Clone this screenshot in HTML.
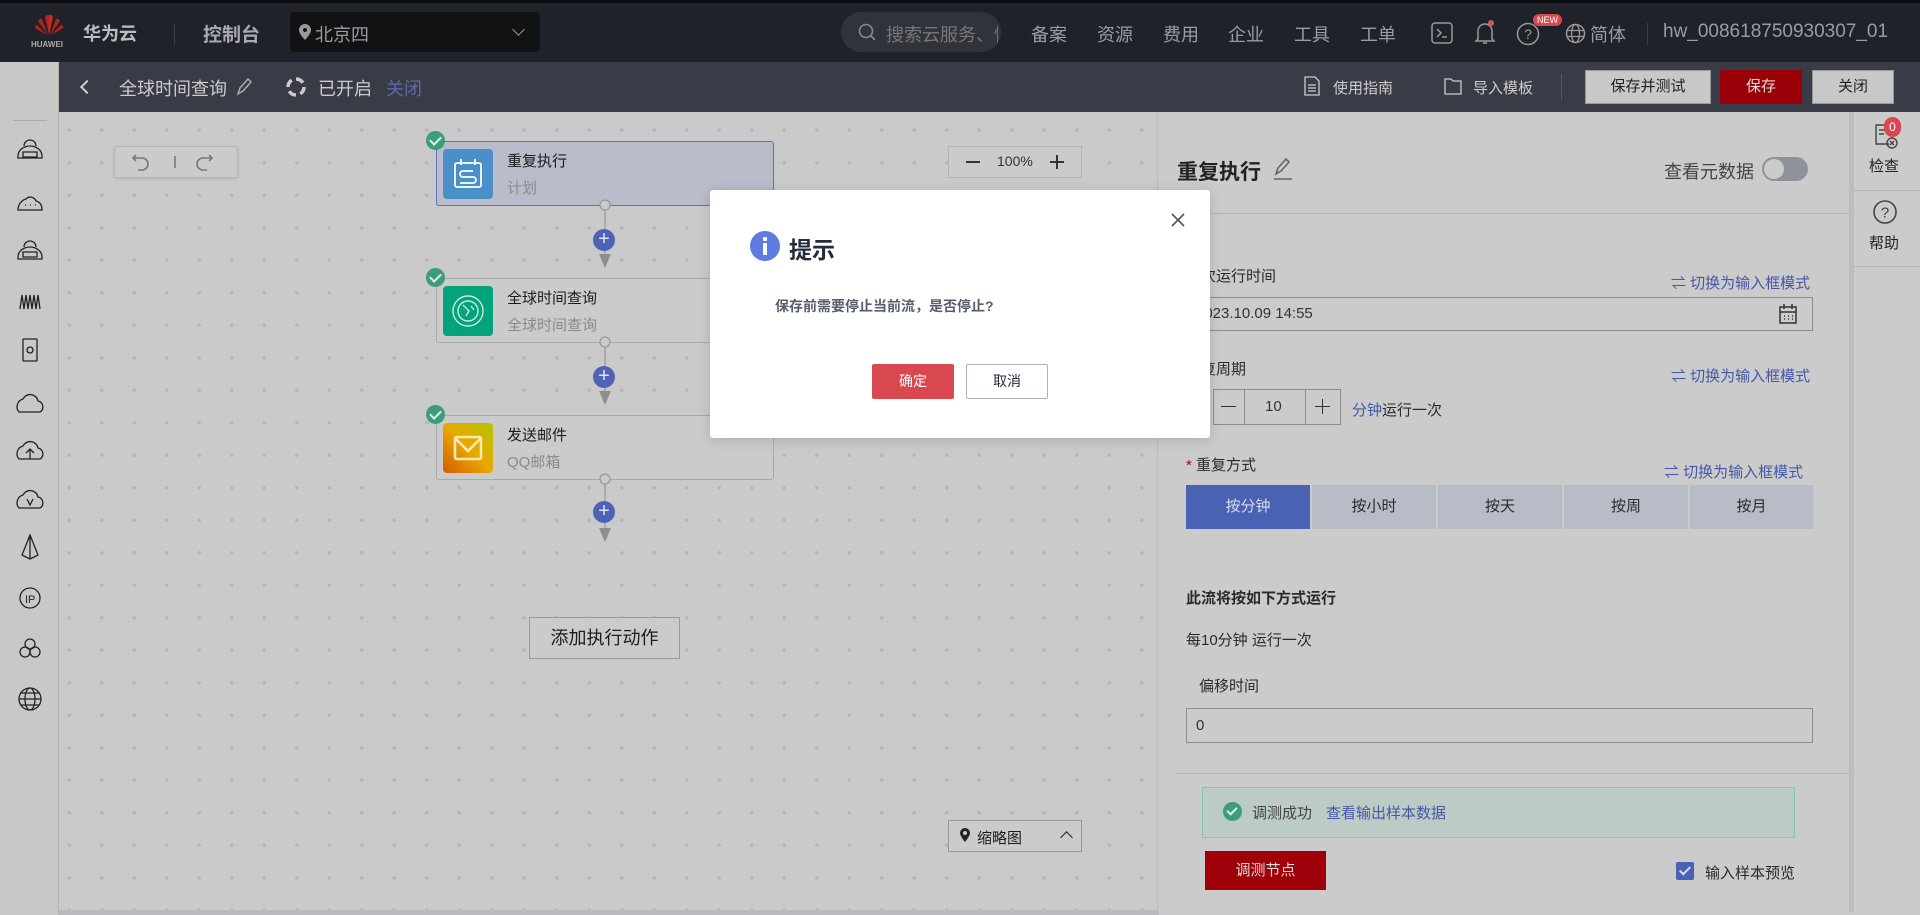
<!DOCTYPE html>
<html><head><meta charset="utf-8">
<style>
*{box-sizing:border-box;margin:0;padding:0}
body{width:1920px;height:915px;overflow:hidden;position:relative;font-family:"Liberation Sans","Noto Sans CJK SC",sans-serif;background:#cacaca;color:#1c1c1c}
.a{position:absolute}
.top{left:0;top:0;width:1920px;height:62px;background:#1f2229;border-top:3px solid #0c0d10}
.tw{color:#9a9ca3;font-size:18px;white-space:nowrap}
.sub{left:0;top:62px;width:1920px;height:50px;background:#393c47}
.side{left:0;top:62px;width:59px;height:853px;background:#c8c8c8;border-right:1px solid #b4b4b4}
.canvas{left:59px;top:112px;width:1098px;height:800px;background-color:#cacaca;background-image:radial-gradient(circle,#b6b6b6 1.6px,transparent 2px);background-size:32.5px 32.5px;background-position:-6px 2px}
.node{width:338px;height:65px;border:1px solid #a9a9a9;border-radius:3px;background:#cbcbcb}
.chk{width:19px;height:19px;border-radius:50%;background:#3d9c7c}
.chk::after{content:"";position:absolute;left:6px;top:3px;width:5px;height:9px;border-right:2px solid #dcefe8;border-bottom:2px solid #dcefe8;transform:rotate(45deg)}
.ic{width:50px;height:50px;border-radius:4px}
.nt{font-size:15px;color:#1c1c1c}
.ns{font-size:15px;color:#8a8a8a}
.plus{width:22px;height:22px;border-radius:50%;background:#4f62b5;color:#dfe3f3;font-size:20px;line-height:21px;text-align:center}
.btnb{border:1px solid #999;background:#cbcbcb}
.panel{left:1157px;top:112px;width:692px;height:800px;background:#cbcbcb;border-left:1px solid #bbb}
.link{color:#4558a8;font-size:15px;white-space:nowrap}
.lbl{font-size:15px;color:#2a2a2a;white-space:nowrap}
.tab{height:44px;background:#b8bcc7;color:#2a2a2a;font-size:15px;text-align:center;line-height:44px}
.ipt{border:1px solid #8a8d94;background:#cbcbcb}
</style></head><body>
<div class="a top">
 <svg class="a" style="left:34px;top:10px" width="30" height="26" viewBox="0 0 30 26"><g fill="#b8221b"><path d="M15 22 L11 4 Q13 1 15 2Z"/><path d="M15 22 L19 4 Q17 1 15 2Z" fill="#c92a22"/><path d="M14 22 L4 8 Q6 5 8 6Z"/><path d="M16 22 L26 8 Q24 5 22 6Z"/><path d="M13 22 L1 15 Q1 12 3 12Z"/><path d="M17 22 L29 15 Q29 12 27 12Z"/></g></svg>
 <div class="a" style="left:31px;top:37px;font-size:8px;color:#aaa;font-weight:bold">HUAWEI</div>
 <div class="a tw" style="left:83px;top:17px;font-weight:bold;color:#bdbec2">华为云</div>
 <div class="a" style="left:174px;top:20px;width:1px;height:22px;background:#3a3d44"></div>
 <div class="a tw" style="left:203px;top:17px;font-weight:bold;color:#a9abb0;font-size:19px">控制台</div>
 <div class="a" style="left:290px;top:9px;width:250px;height:40px;background:#111214;border-radius:4px"></div>
 <svg class="a" style="left:299px;top:21px" width="12" height="16" viewBox="0 0 12 16"><path d="M6 0a6 6 0 0 0-6 6c0 4 6 10 6 10s6-6 6-10a6 6 0 0 0-6-6zm0 8a2 2 0 1 1 0-4 2 2 0 0 1 0 4z" fill="#999"/></svg>
 <div class="a tw" style="left:315px;top:18px">北京四</div>
 <div class="a" style="left:514px;top:22px;width:9px;height:9px;border-right:1.5px solid #999;border-bottom:1.5px solid #999;transform:rotate(45deg)"></div>
 <div class="a" style="left:841px;top:9px;width:160px;height:40px;background:#30333a;border-radius:20px"></div>
 <svg class="a" style="left:858px;top:20px" width="18" height="18"><circle cx="8" cy="8" r="6.5" stroke="#888" stroke-width="1.6" fill="none"/><path d="M13 13l4 4" stroke="#888" stroke-width="1.6"/></svg>
 <div class="a tw" style="left:886px;top:18px;color:#777;width:112px;overflow:hidden">搜索云服务、快</div>
 <div class="a tw" style="left:1031px;top:18px">备案</div>
 <div class="a tw" style="left:1097px;top:18px">资源</div>
 <div class="a tw" style="left:1163px;top:18px">费用</div>
 <div class="a tw" style="left:1228px;top:18px">企业</div>
 <div class="a tw" style="left:1294px;top:18px">工具</div>
 <div class="a tw" style="left:1360px;top:18px">工单</div>
 <svg class="a" style="left:1431px;top:19px" width="22" height="22"><rect x="1" y="1" width="20" height="20" rx="3" stroke="#999" stroke-width="1.5" fill="none"/><path d="M6 7l4 4-4 4M11 15h5" stroke="#999" stroke-width="1.5" fill="none"/></svg>
 <svg class="a" style="left:1474px;top:17px" width="22" height="26"><path d="M4 19V11a7 7 0 0 1 14 0v8l2 2H2z M9 23h4" stroke="#999" stroke-width="1.5" fill="none"/><circle cx="17" cy="3" r="3" fill="#e0525a"/></svg>
 <svg class="a" style="left:1516px;top:19px" width="24" height="24"><circle cx="12" cy="12" r="10.5" stroke="#999" stroke-width="1.5" fill="none"/><text x="12" y="17" font-size="14" fill="#999" text-anchor="middle" font-family="Liberation Sans">?</text></svg>
 <div class="a" style="left:1533px;top:11px;background:#d9474f;color:#fff;font-size:9px;border-radius:7px;padding:1px 4px">NEW</div>
 <svg class="a" style="left:1565px;top:20px" width="21" height="21"><circle cx="10.5" cy="10.5" r="9" stroke="#999" stroke-width="1.5" fill="none"/><ellipse cx="10.5" cy="10.5" rx="4" ry="9" stroke="#999" stroke-width="1.3" fill="none"/><path d="M2 7.5h17M2 13.5h17" stroke="#999" stroke-width="1.3"/></svg>
 <div class="a tw" style="left:1590px;top:18px">简体</div>
 <div class="a" style="left:1647px;top:20px;width:1px;height:22px;background:#3a3d44"></div>
 <div class="a tw" style="left:1663px;top:18px;font-size:19px">hw_008618750930307_01</div>
</div>
<div class="a sub">
 <div class="a" style="left:0;top:0;width:59px;height:50px;background:#c8c8c8"></div>
 <div class="a" style="left:17px;top:15px;width:24px;height:3px;background:#222733;box-shadow:0 8px 0 #222733,0 16px 0 #222733"></div>
 <div class="a" style="left:82px;top:20px;width:10px;height:10px;border-left:2px solid #ccc;border-bottom:2px solid #ccc;transform:rotate(45deg)"></div>
 <div class="a tw" style="left:119px;top:13px;color:#ccc">全球时间查询</div>
 <svg class="a" style="left:235px;top:15px" width="18" height="20"><path d="M3 17l2-6 8-9 3 3-8 9z" stroke="#aaa" stroke-width="1.5" fill="none"/></svg>
 <svg class="a" style="left:285px;top:14px" width="22" height="22"><circle cx="11" cy="11" r="8" stroke="#ccc" stroke-width="3.5" fill="none" stroke-dasharray="8 4.5"/></svg>
 <div class="a tw" style="left:318px;top:13px;color:#ccc">已开启</div>
 <div class="a tw" style="left:386px;top:13px;color:#5f6aa8">关闭</div>
 <svg class="a" style="left:1304px;top:14px" width="16" height="20"><path d="M1 1h10l4 4v14H1z M4 9h8M4 12h8M4 15h8" stroke="#ccc" stroke-width="1.3" fill="none"/></svg>
 <div class="a tw" style="left:1333px;top:15px;color:#ccc;font-size:15px">使用指南</div>
 <svg class="a" style="left:1444px;top:15px" width="18" height="18"><path d="M1 2h6l2 2h8v13H1z" stroke="#ccc" stroke-width="1.3" fill="none"/></svg>
 <div class="a tw" style="left:1473px;top:15px;color:#ccc;font-size:15px">导入模板</div>
 <div class="a" style="left:1561px;top:12px;width:1px;height:26px;background:#55585f"></div>
 <div class="a" style="left:1585px;top:8px;width:126px;height:34px;background:#c8c8c8;border:1px solid #999;color:#222;font-size:15px;text-align:center;line-height:32px">保存并测试</div>
 <div class="a" style="left:1720px;top:8px;width:82px;height:34px;background:#9a0008;color:#ddd;font-size:15px;text-align:center;line-height:34px;border-radius:2px">保存</div>
 <div class="a" style="left:1812px;top:8px;width:82px;height:34px;background:#c8c8c8;border:1px solid #999;color:#222;font-size:15px;text-align:center;line-height:32px">关闭</div>
</div>
<div class="a side">
 <div class="a" style="left:13px;top:58px;width:34px;height:1px;background:#aaa"></div>
 <svg class="a" style="left:14px;top:70px" width="32" height="640" fill="none" stroke="#222" stroke-width="1.3">
  <path d="M4 24a12 10 0 0 1 24 0v2H4z M10 14a6 6 0 0 1 12 0 M9 20h14v5H9z"/>
  <g transform="translate(0,52)"><path d="M4 26c0-6 4-10 8-11a6 6 0 0 1 10 2c4 1 6 4 6 9z M11 21h1M16 21h1M21 21h1"/></g>
  <g transform="translate(0,101)"><path d="M4 24a12 10 0 0 1 24 0v2H4z M10 14a6 6 0 0 1 12 0 M9 19h14v5H9z"/></g>
  <g transform="translate(0,151)"><path d="M6 26l2-14 2 14 2-14 2 14 2-14 2 14 2-14 2 14 2-14 2 14"/></g>
  <g transform="translate(0,201)"><rect x="9" y="6" width="14" height="22" rx="1"/><circle cx="16" cy="17" r="3"/></g>
  <g transform="translate(0,254)"><path d="M5 26a8 8 0 0 1 4-13 8 8 0 0 1 15 2 6 6 0 0 1 2 11z"/></g>
  <g transform="translate(0,301)"><path d="M5 26a8 8 0 0 1 4-13 8 8 0 0 1 15 2 6 6 0 0 1 2 11z M16 26v-9 M12 20l4-4 4 4"/></g>
  <g transform="translate(0,350)"><path d="M5 26a8 8 0 0 1 4-13 8 8 0 0 1 15 2 6 6 0 0 1 2 11z M13 17l3 6 3-6"/></g>
  <g transform="translate(0,399)"><path d="M16 4l-8 20 8 4 8-4z M16 4v24"/></g>
  <g transform="translate(0,450)"><circle cx="16" cy="16" r="10"/><text x="11" y="21" font-size="11" fill="#222" stroke="none" font-family="Liberation Sans">IP</text></g>
  <g transform="translate(0,500)"><circle cx="16" cy="12" r="5"/><circle cx="11" cy="20" r="5"/><circle cx="21" cy="20" r="5"/></g>
  <g transform="translate(0,551)"><circle cx="16" cy="16" r="11"/><ellipse cx="16" cy="16" rx="5" ry="11"/><path d="M5 16h22M7 10h18M7 22h18"/></g>
 </svg>
 <div class="a" style="left:63px;top:420px;border-left:6px solid #333;border-top:5px solid transparent;border-bottom:5px solid transparent"></div>
</div>
<div class="a canvas"></div>
<div class="a" style="left:114px;top:146px;width:124px;height:32px;background:#cbcbcb;border:1px solid #b5b5b5;box-shadow:0 1px 3px rgba(0,0,0,.1)"></div>
<svg class="a" style="left:130px;top:150px" width="100" height="24" fill="none" stroke="#777" stroke-width="1.6"><path d="M6 5l-3 3 3 3M3 8h9a6 6 0 0 1 0 12h-4"/><path d="M45 6v12"/><path d="M79 5l3 3-3 3M82 8h-9a6 6 0 0 0 0 12h4"/></svg>
<div class="a" style="left:948px;top:146px;width:134px;height:32px;background:#cbcbcb;border:1px solid #b5b5b5"></div>
<div class="a" style="left:966px;top:161px;width:14px;height:1.5px;background:#333"></div>
<div class="a" style="left:997px;top:153px;font-size:14px;color:#333">100%</div>
<div class="a" style="left:1050px;top:161px;width:14px;height:1.5px;background:#333"></div>
<div class="a" style="left:1056px;top:155px;width:1.5px;height:14px;background:#333"></div>
<div class="a node" style="left:436px;top:141px;background:#b8bccb;border-color:#5d72c0"></div>
<div class="a ic" style="left:443px;top:149px;background:#4a90c8"></div>
<svg class="a" style="left:451px;top:157px" width="34" height="34" fill="none" stroke="#e8f0f8" stroke-width="2"><rect x="4" y="6" width="26" height="24" rx="2"/><path d="M10 2v6M24 2v6M22 14h-10a3 3 0 0 0 0 6h10a3 3 0 0 1 0 6H9"/></svg>
<div class="a nt" style="left:507px;top:150px">重复执行</div>
<div class="a ns" style="left:507px;top:177px">计划</div>
<div class="a chk" style="left:426px;top:131px"></div>
<div class="a node" style="left:436px;top:278px"></div>
<div class="a ic" style="left:443px;top:286px;background:#03a37c"></div>
<svg class="a" style="left:449px;top:292px" width="38" height="38" fill="none" stroke="#c8ebe0" stroke-width="1.4"><circle cx="19" cy="19" r="15"/><circle cx="19" cy="19" r="10"/><path d="M14 13l6 6-3 5M22 14l3 4"/></svg>
<div class="a nt" style="left:507px;top:287px">全球时间查询</div>
<div class="a ns" style="left:507px;top:314px">全球时间查询</div>
<div class="a chk" style="left:426px;top:268px"></div>
<div class="a node" style="left:436px;top:415px"></div>
<div class="a ic" style="left:443px;top:423px;background:linear-gradient(225deg,#b6c400,#e8a800 50%,#d45a00)"></div>
<svg class="a" style="left:452px;top:432px" width="32" height="32" fill="none" stroke="#fbe9b0" stroke-width="2.6"><rect x="3" y="5" width="26" height="22" rx="2"/><path d="M4 7l12 12 12-12"/></svg>
<div class="a nt" style="left:507px;top:424px">发送邮件</div>
<div class="a ns" style="left:507px;top:451px">QQ邮箱</div>
<div class="a chk" style="left:426px;top:405px"></div>
<svg class="a" style="left:590px;top:198px" width="30" height="350">
 <g stroke="#9a9a9a" stroke-width="1.3" fill="#cbcbcb"><path d="M15 8v56M15 145v56M15 282v56"/><circle cx="15" cy="7" r="5"/><circle cx="15" cy="144" r="5"/><circle cx="15" cy="281" r="5"/></g>
 <g fill="#8e8e8e"><path d="M9 56l6 14 6-14zM9 193l6 14 6-14zM9 330l6 14 6-14z"/></g>
</svg>
<div class="a plus" style="left:593px;top:229px">+</div>
<div class="a plus" style="left:593px;top:366px">+</div>
<div class="a plus" style="left:593px;top:501px">+</div>
<div class="a btnb" style="left:529px;top:617px;width:151px;height:42px;font-size:18px;text-align:center;line-height:40px;color:#1c1c1c">添加执行动作</div>
<div class="a btnb" style="left:948px;top:820px;width:134px;height:32px"></div>
<svg class="a" style="left:960px;top:828px" width="10" height="14"><path d="M5 0a5 5 0 0 0-5 5c0 3 5 9 5 9s5-6 5-9a5 5 0 0 0-5-5zm0 7a2 2 0 1 1 0-4 2 2 0 0 1 0 4z" fill="#222"/></svg>
<div class="a" style="left:977px;top:827px;font-size:15px">缩略图</div>
<div class="a" style="left:1062px;top:833px;width:9px;height:9px;border-left:1.6px solid #222;border-top:1.6px solid #222;transform:rotate(45deg)"></div>
<div class="a" style="left:59px;top:910px;width:1100px;height:5px;background:#b9b9be"></div>
<div class="a panel">
 <div class="a" style="left:19px;top:44px;font-size:21px;font-weight:bold;color:#222">重复执行</div>
 <svg class="a" style="left:114px;top:44px" width="22" height="26"><path d="M4 18l2-6 8-9 3 3-8 9z" stroke="#666" stroke-width="1.6" fill="none"/><path d="M2 23h18" stroke="#666" stroke-width="1.6"/></svg>
 <div class="a" style="left:506px;top:46px;font-size:18px;color:#444">查看元数据</div>
 <div class="a" style="left:604px;top:45px;width:46px;height:24px;border-radius:12px;background:#8f9299"></div>
 <div class="a" style="left:606px;top:47px;width:20px;height:20px;border-radius:50%;background:#cbcbcb"></div>
 <div class="a" style="left:3px;top:101px;width:690px;height:1px;background:#b3b3b3"></div>
 <div class="a lbl" style="left:28px;top:153px">首次运行时间</div>
 <div class="a link" style="left:513px;top:160px">⇌ 切换为输入框模式</div>
 <div class="a ipt" style="left:28px;top:185px;width:627px;height:34px"></div>
 <div class="a" style="left:38px;top:193px;font-size:15px;color:#333">2023.10.09 14:55</div>
 <svg class="a" style="left:620px;top:191px" width="20" height="22" fill="none" stroke="#333" stroke-width="1.5"><rect x="2" y="4" width="16" height="16"/><path d="M6 1v5M14 1v5M2 9h16"/><path d="M6 13h1M10 13h1M14 13h1M6 16h1M10 16h1M14 16h1"/></svg>
 <div class="a lbl" style="left:28px;top:246px">重复周期</div>
 <div class="a link" style="left:513px;top:253px">⇌ 切换为输入框模式</div>
 <div class="a ipt" style="left:55px;top:277px;width:128px;height:36px"></div>
 <div class="a" style="left:86px;top:277px;width:1px;height:36px;background:#8a8d94"></div>
 <div class="a" style="left:147px;top:277px;width:1px;height:36px;background:#8a8d94"></div>
 <div class="a" style="left:63px;top:294px;width:15px;height:1.3px;background:#333"></div>
 <div class="a" style="left:157px;top:294px;width:15px;height:1.3px;background:#333"></div>
 <div class="a" style="left:164px;top:287px;width:1.3px;height:15px;background:#333"></div>
 <div class="a" style="left:107px;top:286px;font-size:15px;color:#333">10</div>
 <div class="a lbl" style="left:194px;top:287px"><span style="color:#4558a8">分钟</span>运行一次</div>
 <div class="a lbl" style="left:28px;top:342px"><span style="color:#a0000a">*</span> 重复方式</div>
 <div class="a link" style="left:506px;top:349px">⇌ 切换为输入框模式</div>
 <div class="a tab" style="left:28px;top:373px;width:124px;background:#4a62b3;color:#d8dcee">按分钟</div>
 <div class="a tab" style="left:154px;top:373px;width:124px">按小时</div>
 <div class="a tab" style="left:280px;top:373px;width:124px">按天</div>
 <div class="a tab" style="left:406px;top:373px;width:124px">按周</div>
 <div class="a tab" style="left:532px;top:373px;width:123px">按月</div>
 <div class="a lbl" style="left:28px;top:475px;font-weight:bold">此流将按如下方式运行</div>
 <div class="a lbl" style="left:28px;top:517px">每10分钟 运行一次</div>
 <div class="a lbl" style="left:41px;top:563px">偏移时间</div>
 <div class="a ipt" style="left:28px;top:596px;width:627px;height:35px"></div>
 <div class="a" style="left:38px;top:605px;font-size:15px;color:#333">0</div>
 <div class="a" style="left:17px;top:661px;width:676px;height:1px;background:#b3b3b3"></div>
 <div class="a" style="left:44px;top:675px;width:593px;height:51px;background:#bccbc6;border:1px solid #86c6ad"></div>
 <div class="a" style="left:65px;top:690px;width:19px;height:19px;border-radius:50%;background:#3d9c7c"></div>
 <div class="a" style="left:71px;top:693px;width:6px;height:10px;border-right:2px solid #e0efe9;border-bottom:2px solid #e0efe9;transform:rotate(45deg)"></div>
 <div class="a lbl" style="left:94px;top:690px;color:#444">调测成功</div>
 <div class="a link" style="left:168px;top:690px">查看输出样本数据</div>
 <div class="a" style="left:47px;top:739px;width:121px;height:39px;background:#a0000a;color:#ddd;font-size:15px;text-align:center;line-height:39px">调测节点</div>
 <div class="a" style="left:518px;top:750px;width:18px;height:18px;background:#4a62b3;border-radius:2px"></div>
 <div class="a" style="left:524px;top:752px;width:6px;height:11px;border-right:2px solid #dde;border-bottom:2px solid #dde;transform:rotate(45deg)"></div>
 <div class="a lbl" style="left:547px;top:750px">输入样本预览</div>
</div>
<div class="a" style="left:1849px;top:112px;width:71px;height:800px;background:#cbcbcb;border-left:5px solid #bdbdc0"></div>
<svg class="a" style="left:1873px;top:122px" width="30" height="30" fill="none" stroke="#444" stroke-width="1.4"><path d="M16 22H3V3h14v10M6 8h8M6 12h5"/><circle cx="19" cy="21" r="5"/><path d="M17 19l4 4M21 19l-4 4"/></svg>
<div class="a" style="left:1884px;top:117px;width:17px;height:20px;border-radius:9px;background:#d9474f;color:#fff;font-size:12px;text-align:center;line-height:20px">0</div>
<div class="a" style="left:1869px;top:155px;font-size:15px;color:#222">检查</div>
<div class="a" style="left:1854px;top:190px;width:66px;height:1px;background:#b5b5b5"></div>
<svg class="a" style="left:1872px;top:199px" width="26" height="26"><circle cx="13" cy="13" r="11" stroke="#444" stroke-width="1.6" fill="none"/><text x="13" y="18.5" font-size="15" fill="#444" text-anchor="middle" font-family="Liberation Sans">?</text></svg>
<div class="a" style="left:1869px;top:232px;font-size:15px;color:#222">帮助</div>
<div class="a" style="left:1854px;top:266px;width:66px;height:1px;background:#b5b5b5"></div>
<div class="a" style="left:710px;top:190px;width:500px;height:248px;background:#fff;border-radius:3px;box-shadow:0 2px 12px rgba(0,0,0,.15)"></div>
<svg class="a" style="left:1170px;top:212px" width="16" height="16"><path d="M2 2l12 12M14 2L2 14" stroke="#555" stroke-width="1.6"/></svg>
<div class="a" style="left:750px;top:231px;width:30px;height:30px;border-radius:50%;background:#5e7ce0"></div>
<div class="a" style="left:763px;top:237px;width:4px;height:4px;background:#fff;border-radius:1px"></div>
<div class="a" style="left:763px;top:243px;width:4px;height:12px;background:#fff"></div>
<div class="a" style="left:789px;top:231px;font-size:23px;font-weight:bold;color:#252b3a">提示</div>
<div class="a" style="left:775px;top:296px;font-size:14px;font-weight:bold;color:#575d6c">保存前需要停止当前流，是否停止?</div>
<div class="a" style="left:872px;top:364px;width:82px;height:35px;background:#d9474f;border-radius:2px;color:#fff;font-size:14px;text-align:center;line-height:35px">确定</div>
<div class="a" style="left:966px;top:364px;width:82px;height:35px;border:1px solid #adb0b8;border-radius:2px;color:#252b3a;font-size:14px;text-align:center;line-height:33px">取消</div>
</body></html>
